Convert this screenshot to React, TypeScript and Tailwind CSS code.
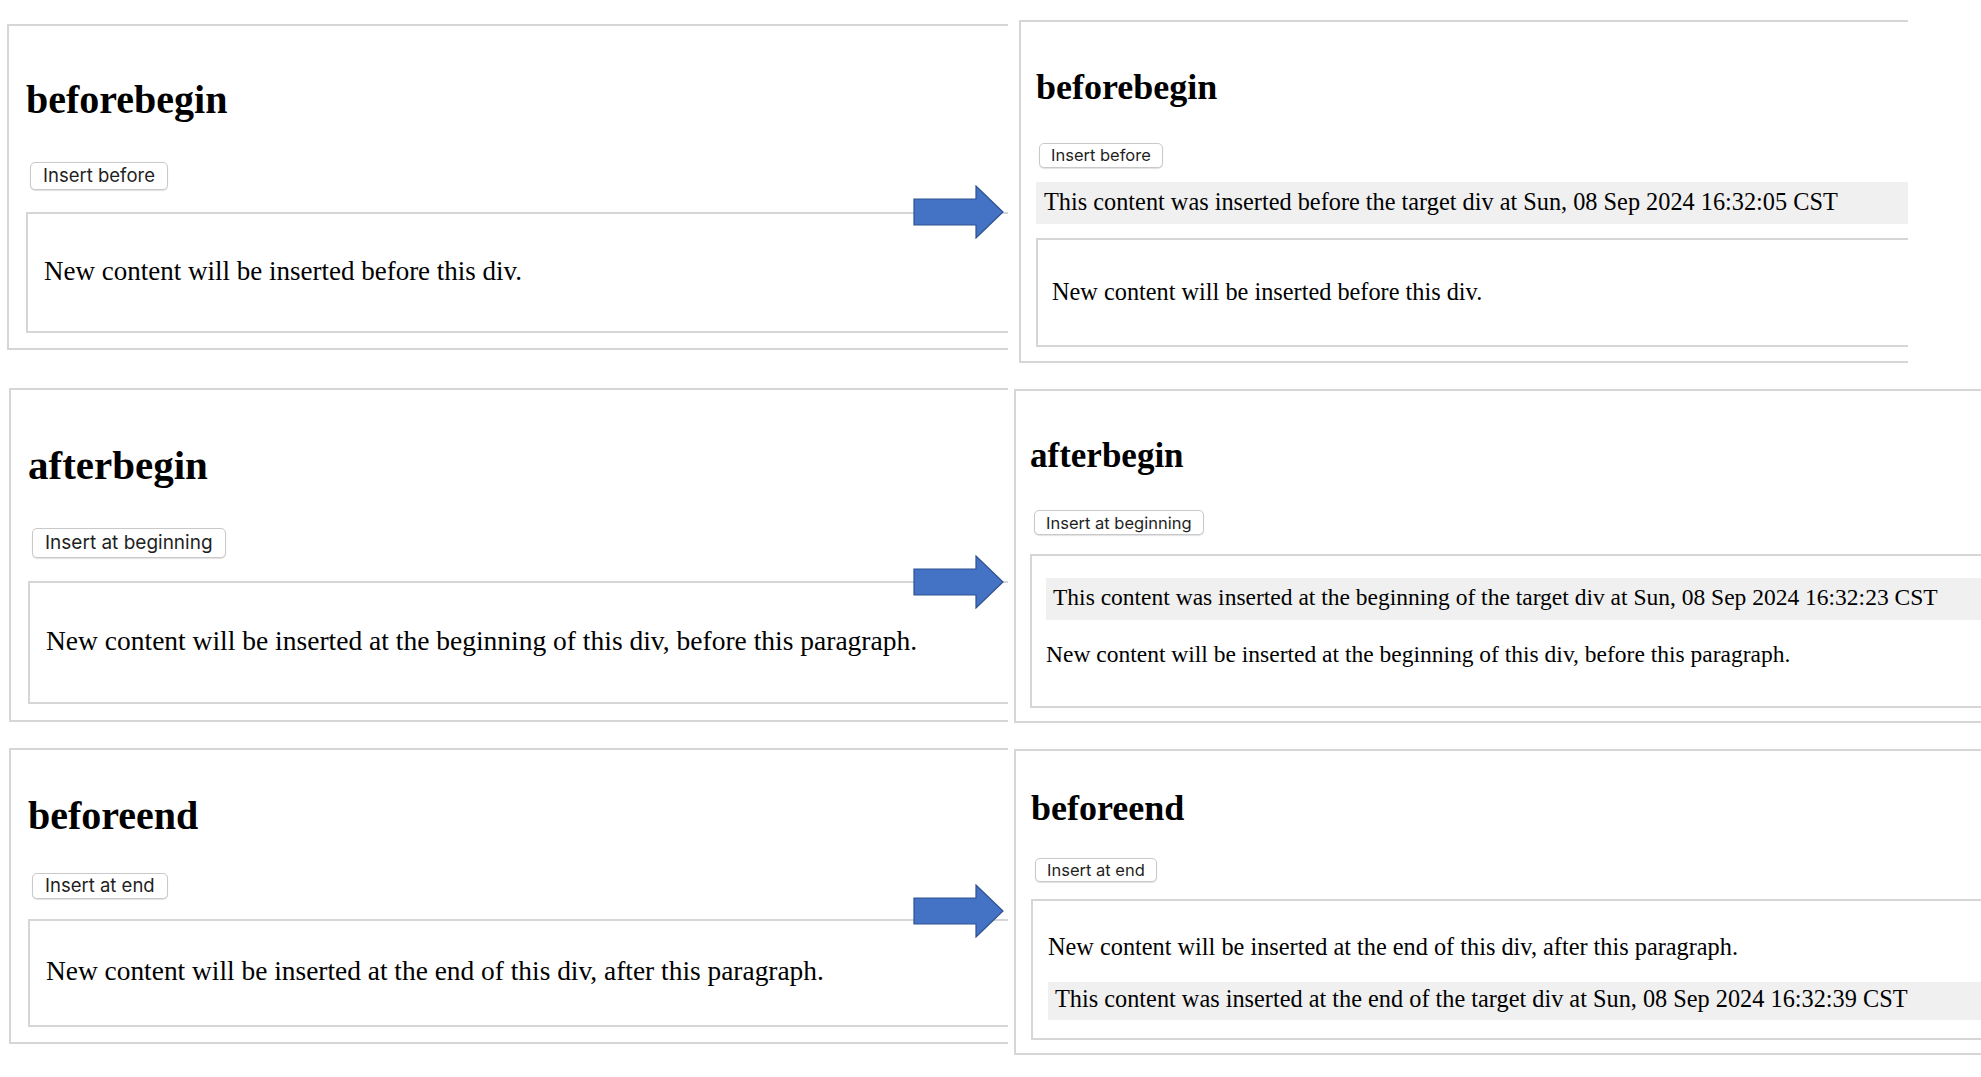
import React from "react";
import clsx from "clsx";

type BoxProps = { className?: string; children?: React.ReactNode };

// Outer frame of one captured page: top, left and bottom rules, cut off on the right
const Frame = ({ className, children }: BoxProps) => (
  <section
    className={clsx(
      "flex flex-col items-start border-y-2 border-l-2 border-[#d6d6d6]",
      className
    )}
  >
    {children}
  </section>
);

const Heading = ({ className, children }: BoxProps) => (
  <h2 className={clsx("font-bold leading-none text-black", className)}>
    {children}
  </h2>
);

const DemoButton = ({ className, children }: BoxProps) => (
  <button
    type="button"
    className={clsx(
      "flex items-center rounded-[5px] border border-[#c9c9c9] bg-white font-['Inter',sans-serif] text-[#1f1f1f] shadow-[0_1px_1px_rgba(0,0,0,0.12)]",
      className
    )}
  >
    {children}
  </button>
);

// The div the new content is inserted around
const Target = ({ className, children }: BoxProps) => (
  <div
    className={clsx(
      "self-stretch border-y-2 border-l-2 border-[#d6d6d6]",
      className
    )}
  >
    {children}
  </div>
);

// Paragraph added by insertAdjacentHTML
const Inserted = ({ className, children }: BoxProps) => (
  <p className={clsx("self-stretch bg-[#f0f0f0] leading-none", className)}>
    {children}
  </p>
);

const Arrow = ({ className }: { className?: string }) => (
  <svg
    className={clsx("absolute", className)}
    width="92"
    height="54"
    viewBox="0 0 92 54"
  >
    <path
      d="M1 14 H63 V1 L90 27 L63 53 V40 H1 Z"
      fill="#4472c4"
      stroke="#2f528f"
      strokeWidth="1.2"
      strokeLinejoin="miter"
    />
  </svg>
);

export default function App() {
  return (
    <div className="relative h-[1077px] w-[1981px] overflow-hidden bg-white font-['Liberation_Serif','Times_New_Roman',serif] text-black">
      <div className="flex">
        {/* pages before clicking */}
        <div className="flex w-[1008px] shrink-0 flex-col pt-[24px]">
          <Frame className="ml-[7px] pb-[15px] pl-[17px]">
            <Heading className="mt-[53.5px] text-[40px]">beforebegin</Heading>
            <DemoButton className="ml-[4px] mt-[42.5px] h-[28px] px-[12px] text-[18.5px]">
              Insert before
            </DemoButton>
            <Target className="mt-[22px] pb-[46px] pl-[16px] pt-[44px]">
              <p className="text-[27px] leading-none">
                New content will be inserted before this div.
              </p>
            </Target>
          </Frame>

          <Frame className="ml-[9px] mt-[38px] pb-[16px] pl-[17px]">
            <Heading className="mt-[55px] text-[41px]">afterbegin</Heading>
            <DemoButton className="ml-[4px] mt-[42px] h-[30px] px-[12px] text-[19px]">
              Insert at beginning
            </DemoButton>
            <Target className="mt-[23px] pb-[47.5px] pl-[16px] pt-[44px]">
              <p className="text-[27.5px] leading-none">
                New content will be inserted at the beginning of this div,
                before this paragraph.
              </p>
            </Target>
          </Frame>

          <Frame className="ml-[9px] mt-[26px] pb-[15px] pl-[17px]">
            <Heading className="mt-[45.5px] text-[40px]">beforeend</Heading>
            <DemoButton className="ml-[4px] mt-[37.5px] h-[26px] px-[12px] text-[18.5px]">
              Insert at end
            </DemoButton>
            <Target className="mt-[20px] pb-[39.6px] pl-[16px] pt-[37px]">
              <p className="text-[27.4px] leading-none">
                New content will be inserted at the end of this div, after this
                paragraph.
              </p>
            </Target>
          </Frame>
        </div>

        {/* pages after clicking */}
        <div className="flex min-w-0 flex-1 flex-col pt-[20px]">
          <Frame className="ml-[11px] w-[889px] pb-[14px] pl-[15px]">
            <Heading className="mt-[47px] text-[36px]">beforebegin</Heading>
            <DemoButton className="ml-[3px] mt-[38px] h-[25px] px-[11px] text-[16.5px]">
              Insert before
            </DemoButton>
            <Inserted className="mt-[13.5px] pb-[10px] pl-[8px] pt-[8.2px] text-[24.3px]">
              This content was inserted before the target div at Sun, 08 Sep
              2024 16:32:05 CST
            </Inserted>
            <Target className="mt-[14.5px] pb-[41px] pl-[14px] pt-[39.7px]">
              <p className="text-[24.3px] leading-none">
                New content will be inserted before this div.
              </p>
            </Target>
          </Frame>

          <Frame className="ml-[6px] mt-[26px] pb-[13px] pl-[14px]">
            <Heading className="mt-[46.7px] text-[35px]">afterbegin</Heading>
            <DemoButton className="ml-[4px] mt-[37.3px] h-[25px] px-[11px] text-[16.5px]">
              Insert at beginning
            </DemoButton>
            <Target className="mt-[19px] flex flex-col pb-[40px] pl-[14px] pt-[22px]">
              <Inserted className="pb-[10.7px] pl-[7px] pt-[7.8px] text-[23.5px]">
                This content was inserted at the beginning of the target div at
                Sun, 08 Sep 2024 16:32:23 CST
              </Inserted>
              <p className="mt-[22.3px] text-[23.5px] leading-none">
                New content will be inserted at the beginning of this div,
                before this paragraph.
              </p>
            </Target>
          </Frame>

          <Frame className="ml-[6px] mt-[26px] pb-[13px] pl-[15px]">
            <Heading className="mt-[39px] text-[36px]">beforeend</Heading>
            <DemoButton className="ml-[4px] mt-[32px] h-[24px] px-[11px] text-[16.5px]">
              Insert at end
            </DemoButton>
            <Target className="mt-[17px] flex flex-col pb-[18px] pl-[15px] pt-[33.7px]">
              <p className="text-[24.3px] leading-none">
                New content will be inserted at the end of this div, after this
                paragraph.
              </p>
              <Inserted className="mt-[23px] pb-[8.5px] pl-[7px] pt-[5.2px] text-[24.3px]">
                This content was inserted at the end of the target div at Sun,
                08 Sep 2024 16:32:39 CST
              </Inserted>
            </Target>
          </Frame>
        </div>
      </div>

      <Arrow className="left-[913px] top-[185px]" />
      <Arrow className="left-[913px] top-[555px]" />
      <Arrow className="left-[913px] top-[884px]" />
    </div>
  );
}
